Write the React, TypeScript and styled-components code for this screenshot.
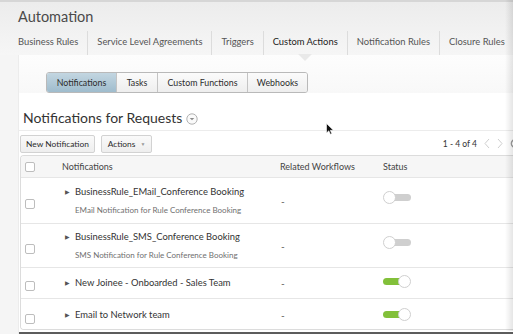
import React from "react";
import styled, { createGlobalStyle } from "styled-components";

const Global = createGlobalStyle`
  html, body { margin: 0; padding: 0; height: 334px; overflow: hidden; }
  body { background: #f5f5f5; font-family: Lato, "Open Sans", sans-serif; color: #333; }
  #root { height: 334px; }
`;

const Page = styled.div`
  position: relative;
  display: flex;
  flex-direction: column;
  height: 334px;
  overflow: hidden;
`;

const Header = styled.div`
  height: 53px;
  border-top: 2px solid #d6d6d6;
  background: linear-gradient(#ececec, #f6f6f6);
  display: flex;
  flex-direction: column;
  position: relative;
`;

const Title = styled.div`
  font-size: 14.5px;
  color: #4a4a4a;
  padding: 4px 0 0 18px;
  height: 22px;
  line-height: 22px;
`;

const Tabs = styled.div`
  display: flex;
  padding-left: 9px;
  margin-top: 3px;
`;

const Tab = styled.div<{ $active?: boolean }>`
  position: relative;
  padding: 0 9px;
  height: 24px;
  line-height: 22px;
  font-size: 9.4px;
  color: ${(p) => (p.$active ? "#222" : "#555")};
  border-right: 1px solid #dcdcdc;
  white-space: nowrap;
  &::after {
    content: "";
    display: ${(p) => (p.$active ? "block" : "none")};
    position: absolute;
    left: 50%;
    bottom: -6px;
    margin-left: -7px;
    border-left: 7px solid transparent;
    border-right: 7px solid transparent;
    border-top: 7px solid #e9e9e9;
  }
`;

const Main = styled.div`
  flex: 1;
  display: flex;
  flex-direction: column;
  background: #fff;
  margin-left: 18px;
  border-left: 1px solid #ececec;
`;

const SegWrap = styled.div`
  display: flex;
  padding: 17px 0 0 27px;
  background: linear-gradient(#fdfdfd, #f8f8f8);
`;

const Segmented = styled.div`
  display: flex;
  border: 1px solid #b9b9b9;
  border-radius: 3px;
  overflow: hidden;
  height: 19px;
`;

const Seg = styled.div<{ $active?: boolean; $w: number }>`
  width: ${(p) => p.$w}px;
  text-align: center;
  line-height: 19px;
  font-size: 8.8px;
  color: #2c2c2c;
  background: ${(p) =>
    p.$active ? "linear-gradient(#c3d6e1, #9fbccd)" : "linear-gradient(#fbfbfb, #eeeeee)"};
  border-left: 1px solid #c4c4c4;
  &:first-child { border-left: none; }
`;

const HeadingRow = styled.div`
  display: flex;
  align-items: center;
  gap: 4px;
  padding: 12px 0 0 4px;
  height: 25px;
  border-bottom: 1px solid #ececec;
  background: #fff;
`;

const Heading = styled.h1`
  margin: 0;
  font-weight: 400;
  font-size: 14px;
  line-height: 22px;
  color: #333;
`;

const CircleIcon = styled.svg`
  width: 12px;
  height: 12px;
  margin-top: 3px;
`;

const Toolbar = styled.div`
  display: flex;
  align-items: flex-start;
  gap: 6px;
  padding: 4px 0 0 1px;
  height: 20px;
  background: #fff;
`;

const Button = styled.div<{ $w: number }>`
  width: ${(p) => p.$w}px;
  box-sizing: border-box;
  height: 18px;
  border: 1px solid #d2d2d2;
  border-radius: 2px;
  background: linear-gradient(#fafafa, #eeeeee);
  font-size: 8.4px;
  color: #2b2b2b;
  display: flex;
  align-items: center;
  justify-content: center;
  gap: 5px;
`;

const Caret = styled.span`
  font-size: 5px;
  color: #999;
`;

const Pager = styled.div`
  margin-left: auto;
  display: flex;
  align-items: center;
  gap: 7px;
  height: 17px;
  font-size: 8.5px;
  color: #333;
  margin-right: -7px;
`;

const Chevron = styled.svg`
  width: 6px;
  height: 11px;
`;

const Table = styled.div`
  margin-left: 1px;
  border: 1px solid #dcdcdc;
  border-right: none;
  border-radius: 4px 0 0 4px;
  height: 173px;
  overflow: hidden;
`;

const Row = styled.div<{ $h: number; $head?: boolean }>`
  display: grid;
  grid-template-columns: 41px 218px 103px 1fr;
  align-items: center;
  height: ${(p) => p.$h}px;
  border-bottom: 1px solid #e6e6e6;
  background: ${(p) => (p.$head ? "#f6f6f6" : "#fff")};
  box-sizing: border-box;
  &:last-child { border-bottom: none; }
`;

const CheckCell = styled.div<{ $offset?: number }>`
  padding-left: 4px;
  padding-top: ${(p) => p.$offset ?? 0}px;
  display: flex;
`;

const Check = styled.span`
  width: 8px;
  height: 8px;
  border: 1px solid #bdbdbd;
  border-radius: 2px;
  background: #fff;
`;

const HeadText = styled.div`
  font-size: 9px;
  color: #444;
`;

const NameCell = styled.div`
  display: flex;
  flex-direction: column;
  gap: 3px;
  padding-left: 3px;
`;

const NameLine = styled.div`
  display: flex;
  align-items: center;
  font-size: 9.4px;
  color: #333;
  line-height: 16px;
  white-space: nowrap;
`;

const Tri = styled.span`
  width: 10px;
  font-size: 5.5px;
  color: #555;
`;

const Sub = styled.div`
  font-size: 8px;
  color: #6f6f6f;
  padding-left: 10px;
  line-height: 14px;
  white-space: nowrap;
`;

const Dash = styled.div`
  font-size: 10px;
  color: #555;
  padding-left: 1px;
`;

const ToggleSlot = styled.div<{ $shift: number }>`
  margin-top: ${(p) => p.$shift}px;
`;

const Toggle = styled.div<{ $on?: boolean }>`
  position: relative;
  width: 28px;
  height: 13px;
  &::before {
    content: "";
    position: absolute;
    top: 3px;
    left: ${(p) => (p.$on ? "0" : "6px")};
    width: 22px;
    height: 7px;
    border-radius: 4px;
    background: ${(p) => (p.$on ? "#82c03a" : "#cfcfcf")};
  }
  &::after {
    content: "";
    position: absolute;
    top: 0;
    left: ${(p) => (p.$on ? "15px" : "0")};
    width: 11px;
    height: 11px;
    border-radius: 50%;
    background: #fff;
    border: 1px solid #cfcfcf;
  }
`;

const RightShade = styled.div`
  position: absolute;
  top: 0;
  right: 0;
  width: 8px;
  bottom: 3px;
  background: linear-gradient(to right, rgba(0,0,0,0), rgba(0,0,0,0.1));
  pointer-events: none;
`;

const Footer = styled.div`
  height: 3px;
  margin-top: 2px;
  background: #5c5c5c;
`;

const Cursor = styled.svg`
  position: absolute;
  left: 326px;
  top: 123px;
  width: 8px;
  height: 12px;
`;

type Item = { name: string; sub?: string; on: boolean; h: number; check: number; toggle: number };

const items: Item[] = [
  { name: "BusinessRule_EMail_Conference Booking", sub: "EMail Notification for Rule Conference Booking", on: false, h: 46, check: 7, toggle: -6 },
  { name: "BusinessRule_SMS_Conference Booking", sub: "SMS Notification for Rule Conference Booking", on: false, h: 44, check: 7, toggle: -6 },
  { name: "New Joinee - Onboarded - Sales Team", on: true, h: 31, check: 6, toggle: -3 },
  { name: "Email to Network team", on: true, h: 32, check: 8, toggle: -2 },
];

export default function App() {
  return (
    <>
      <Global />
      <Page>
        <Header>
          <Title>Automation</Title>
          <Tabs>
            <Tab>Business Rules</Tab>
            <Tab>Service Level Agreements</Tab>
            <Tab>Triggers</Tab>
            <Tab $active>Custom Actions</Tab>
            <Tab>Notification Rules</Tab>
            <Tab>Closure Rules</Tab>
          </Tabs>
        </Header>
        <Main>
          <SegWrap>
            <Segmented>
              <Seg $active $w={69}>Notifications</Seg>
              <Seg $w={40}>Tasks</Seg>
              <Seg $w={89}>Custom Functions</Seg>
              <Seg $w={59}>Webhooks</Seg>
            </Segmented>
          </SegWrap>
          <HeadingRow>
            <Heading>Notifications for Requests</Heading>
            <CircleIcon viewBox="0 0 12 12">
              <circle cx="6" cy="6" r="5.2" fill="#fafafa" stroke="#a8a8a8" strokeWidth="0.9" />
              <path d="M3.7 5 L6 7.3 L8.3 5 Z" fill="#8a8a8a" />
            </CircleIcon>
          </HeadingRow>
          <Toolbar>
            <Button $w={75}>New Notification</Button>
            <Button $w={51}>
              Actions <Caret>▼</Caret>
            </Button>
            <Pager>
              <span>1 - 4 of 4</span>
              <Chevron viewBox="0 0 6 11">
                <polyline points="5,1 1,5.5 5,10" fill="none" stroke="#cfcfcf" strokeWidth="1" />
              </Chevron>
              <Chevron viewBox="0 0 6 11">
                <polyline points="1,1 5,5.5 1,10" fill="none" stroke="#cfcfcf" strokeWidth="1" />
              </Chevron>
              <Chevron viewBox="0 0 10 11" style={{ width: 10 }}>
                <path d="M8 2.5 A4 4 0 1 0 8 8.5" fill="none" stroke="#9a9a9a" strokeWidth="1.4" />
              </Chevron>
            </Pager>
          </Toolbar>
          <Table>
            <Row $h={22} $head>
              <CheckCell><Check /></CheckCell>
              <HeadText>Notifications</HeadText>
              <HeadText>Related Workflows</HeadText>
              <HeadText>Status</HeadText>
            </Row>
            {items.map((it) => (
              <Row key={it.name} $h={it.h}>
                <CheckCell $offset={it.check}><Check /></CheckCell>
                <NameCell>
                  <NameLine>
                    <Tri>▶</Tri>
                    {it.name}
                  </NameLine>
                  {it.sub && <Sub>{it.sub}</Sub>}
                </NameCell>
                <Dash>-</Dash>
                <ToggleSlot $shift={it.toggle}>
                  <Toggle $on={it.on} />
                </ToggleSlot>
              </Row>
            ))}
          </Table>
          <Footer />
        </Main>
        <RightShade />
        <Cursor viewBox="0 0 8 12">
          <path d="M0.5 0.5 L0.5 10 L2.8 7.8 L4.4 11.3 L5.8 10.7 L4.3 7.3 L7.4 7.3 Z" fill="#111" stroke="#fff" strokeWidth="0.6" />
        </Cursor>
      </Page>
    </>
  );
}
